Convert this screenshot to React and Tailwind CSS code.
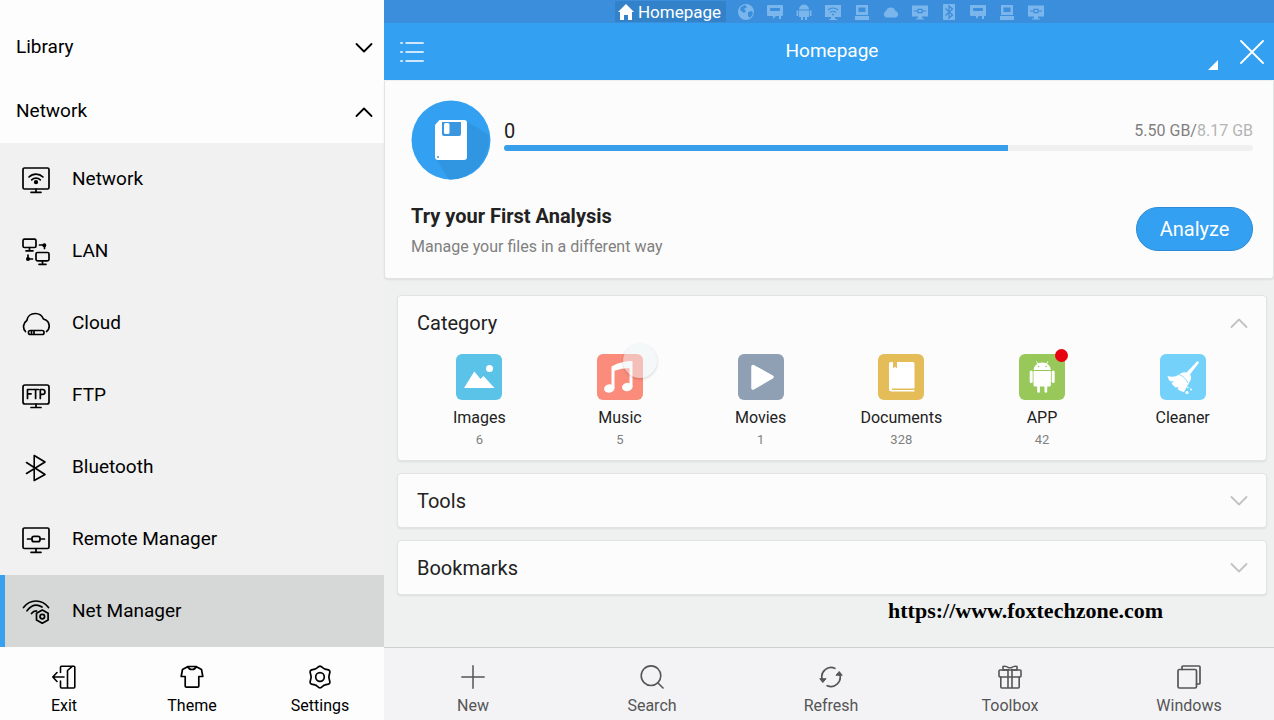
import React from "react";

function Svg({ size = "size-7", box = 28, width = 1.7, children, className = "" }) {
  return (
    <svg
      viewBox={`0 0 ${box} ${box}`}
      className={`${size} shrink-0 ${className}`}
      fill="none"
      stroke="currentColor"
      strokeWidth={width}
      strokeLinecap="round"
      strokeLinejoin="round"
      aria-hidden="true"
    >
      {children}
    </svg>
  );
}

/* Side menu icons */
const NetworkIcon = () => (
  <Svg>
    <rect x="1" y="2" width="26" height="21" rx="1.5" />
    <path d="M14 23v3M9 26.3h10M7 11a10 10 0 0 1 14 0M9.7 13.8a6.2 6.2 0 0 1 8.6 0" />
    <circle cx="14" cy="16.2" r="1.3" fill="currentColor" />
  </Svg>
);
const LanIcon = () => (
  <Svg>
    <rect x="1" y="1.2" width="13" height="8.3" rx="1.5" />
    <path d="M7.5 9.5v3M4 12.8h7" />
    <rect x="14" y="14.5" width="13" height="8.3" rx="1.5" />
    <path d="M20.500 22.800v3M17 26.300h7M17.500 7h5v3.500M10.500 21H6v-4" />
    <circle cx="22.300" cy="7.200" r="1.200" fill="currentColor" />
    <circle cx="6" cy="21" r="1.200" fill="currentColor" />
  </Svg>
);
const CloudIcon = () => (
  <Svg>
    <path d="M3.500 21.500A7.300 7.300 0 0 1 4.800 10.500C5.500 6.200 9 3.500 13.200 3.500c3.800 0 7 2.200 8.200 5.500C25 10 27.200 13 27.200 16.300c0 2-.8 3.900-2.600 5.200" />
    <rect x="6.500" y="20.500" width="15.500" height="4" rx="1.800" />
    <path d="M9.500 21v3M12 21v3" />
  </Svg>
);
const FtpIcon = () => (
  <Svg>
    <rect x="1" y="3" width="26" height="19" rx="2" />
    <path d="M14 22v3.500M9 25.500h10" />
    <path d="M5.500 16.500v-9h4.300M5.500 11.800h3.600M10.800 7.500h5.700M13.600 7.500v9M18.300 16.500v-9h2.200a2.300 2.300 0 0 1 0 4.900h-2.200" />
  </Svg>
);
const BluetoothIcon = () => (
  <Svg width={1.6}>
    <path d="M4.500 8.500l18.500 12-10.800 6V1.500L23 8 4.500 19.500" />
  </Svg>
);
const RemoteIcon = () => (
  <Svg>
    <rect x="1" y="2" width="26" height="20.500" rx="1.500" />
    <path d="M14 22.500V26M9 26.300h10M5.500 13h4.500M18 13h4.500" />
    <rect x="10" y="10.300" width="8" height="5.400" rx="2" />
  </Svg>
);
const NetManagerIcon = () => (
  <Svg>
    <path d="M1.500 9.500C8 .8 20 .8 26.500 9.500M5 12.800C9.500 7 15 6 20 9M9.500 15.500c1.200-1.700 3-2.600 5-2.600" />
    <path d="M20.300 12l5.800 3.300v6.600l-5.800 3.300-5.800-3.300v-6.600z" />
    <circle cx="20.300" cy="18.600" r="2.300" />
  </Svg>
);

/* Side footer icons */
const ExitIcon = () => (
  <Svg size="size-6" box={24} width={1.6}>
    <path d="M8.500 7.500V2.200Q8.500 1.200 9.500 1.200H21.800Q22.800 1.200 22.800 2.200V22Q22.800 23 21.800 23H9.500Q8.500 23 8.500 22V16M20.500 1.200L15.500 5.500V23M12 12H.8M5 7.500L.8 12 5 16.500" />
  </Svg>
);
const ThemeIcon = () => (
  <Svg size="size-6" box={24} width={1.7}>
    <path d="M8 1.500h8l5.500 3 1.300 7h-4V21q0 1.200-1.200 1.200H6.400Q5.200 22.200 5.200 21v-9.500h-4l1.300-7zM8 1.500c.8 4 7.200 4 8 0" />
  </Svg>
);
const SettingsIcon = () => (
  <Svg size="size-6" box={24} width={1.7}>
    <path d="M10.900 1.500q1.100-.7 2.200 0c1.600 1.200 2.400 2.300 4 2.600l3.300.8q1.500.5 1.500 1.900c-.2 2-1 3.400-1 5.200s.8 3.200 1 5.200q0 1.400-1.500 1.900l-3.300.8c-1.600.3-2.400 1.400-4 2.600q-1.100.7-2.200 0c-1.600-1.200-2.400-2.300-4-2.600l-3.300-.8q-1.500-.5-1.500-1.900c.2-2 1-3.400 1-5.200s-.8-3.200-1-5.200q0-1.400 1.500-1.900l3.300-.8c1.600-.3 2.400-1.400 4-2.600z" />
    <circle cx="12" cy="12" r="4.300" />
  </Svg>
);

/* Bottom toolbar icons */
const PlusIcon = () => (
  <Svg size="size-6" box={24} width={1.5}>
    <path d="M12 .8v22.400M.8 12h22.400" />
  </Svg>
);
const SearchIcon = () => (
  <Svg size="size-6" box={24} width={1.6}>
    <circle cx="11" cy="10.700" r="9.800" />
    <path d="M18 18l5 5" />
  </Svg>
);
const RefreshIcon = () => (
  <Svg size="size-6" box={24} width={1.7}>
    <path d="M15.800 3.300A9.300 9.300 0 0 0 3.200 14.500M8.200 20.700A9.300 9.300 0 0 0 20.800 9.500" />
    <path d="M1 14l2.800 3.500L6.800 14zM23 10l-2.800-3.500L17.200 10z" fill="currentColor" strokeWidth="1" />
  </Svg>
);
const ToolboxIcon = () => (
  <Svg size="size-6" box={24} width={1.6}>
    <rect x="1" y="5" width="22" height="7" rx="1" />
    <path d="M2.800 12v10q0 1 1 1h16.400q1 0 1-1V12M10 5v18M14 5v18M10.500 4.800L5 5V1.500q3-.8 5.500 1.200h3Q16 .7 19 1.500V5l-5.500-.2" />
  </Svg>
);
const WindowsIcon = () => (
  <Svg size="size-6" box={24} width={1.7}>
    <rect x="1" y="4.500" width="18.500" height="18.500" rx="1.500" />
    <path d="M5 4.500V2q0-1 1-1h16q1 0 1 1v16q0 1-1 1h-2.500" />
  </Svg>
);

const Chevron = ({ up, className }) => (
  <Svg size="size-[18px]" box={18} width={1.8} className={className}>
    <path d={up ? "M1.500 13L9 5.500l7.500 7.500" : "M1.500 5L9 12.500 16.500 5"} />
  </Svg>
);

/* Small solid glyphs of the window strip */
const dim = "#3a8edb";
const stripGlyphs = {
  web: (
    <>
      <circle cx="9" cy="9" r="8" />
      <path d="M4 4l4-2 2 2-3 2 2 2-2 2-4-3zM11 9l4-1 1 3-3 4-2-2z" fill={dim} />
    </>
  ),
  chat: (
    <>
      <path d="M2 2h14q1 0 1 1v9q0 1-1 1h-1v3h-2v-3h-3l-3 3v-3H2q-1 0-1-1V3q0-1 1-1z" />
      <rect x="4" y="5" width="10" height="3" rx="1" fill={dim} />
    </>
  ),
  android: (
    <path d="M4 6.500a5 5 0 0 1 10 0zM4 7.500h10V14H4zM1.500 7.500h1.800V13H1.500zM14.700 7.500h1.800V13h-1.800zM6 14h2v3H6zM10 14h2v3h-2zM5 1l2 2M13 1l-2 2" />
  ),
  wifi: (
    <>
      <path d="M1 2h16v12h-6v2h2v1H5v-1h2v-2H1z" />
      <path d="M4 7q5-4 10 0M6 9.500q3-2.500 6 0" fill="none" stroke={dim} strokeWidth="1.200" />
      <circle cx="9" cy="11.500" r="1" fill={dim} />
    </>
  ),
  pc: (
    <>
      <path d="M3 2h12v10H3zM2 13h14v4H2z" />
      <path d="M5.500 4.500h7V9h-7z" fill={dim} />
    </>
  ),
  cloud: <path d="M4 14.500a3.500 3.500 0 0 1 0-6.500 5 5 0 0 1 9.500 0A3.400 3.400 0 0 1 14 14.500z" />,
  remote: (
    <>
      <path d="M1 2.500h16v11h-6v2h2v1H5v-1h2v-2H1z" />
      <path d="M3 8h4M11 8h4M7 6.300h4v3.400H7z" fill="none" stroke={dim} strokeWidth="1.200" />
    </>
  ),
  bluetooth: (
    <>
      <rect x="3" y="1" width="12" height="16" rx="1" />
      <path d="M5.500 5.500l7 6.500L9 15V3l3.500 3-7 6.500" fill="none" stroke={dim} strokeWidth="1.300" />
    </>
  ),
};
const strip = [
  ["Web", "web"],
  ["Messages", "chat"],
  ["Apps", "android"],
  ["Wi-Fi", "wifi"],
  ["Computer", "pc"],
  ["Cloud", "cloud"],
  ["Remote", "remote"],
  ["Bluetooth", "bluetooth"],
  ["Messages 2", "chat"],
  ["Computer 2", "pc"],
  ["Remote 2", "remote"],
];

const menu = [
  ["Network", NetworkIcon],
  ["LAN", LanIcon],
  ["Cloud", CloudIcon],
  ["FTP", FtpIcon],
  ["Bluetooth", BluetoothIcon],
  ["Remote Manager", RemoteIcon],
  ["Net Manager", NetManagerIcon],
];

/* Category tiles, drawn on a 46-unit square */
const categories = [
  {
    name: "Images",
    count: "6",
    color: "bg-[#5bc3e8]",
    art: (
      <>
        <path d="M8 34L18.300 17.500l6.200 7.500 3-3L38.500 34z" />
        <circle cx="33.500" cy="14.500" r="3.500" />
      </>
    ),
  },
  {
    name: "Music",
    count: "5",
    color: "bg-[#fb8b7a]",
    touch: true,
    art: (
      <>
        <path d="M14.500 12.500Q24 7 35.500 7v26h-3V14q-8 .2-15 2.800V34h-3z" />
        <ellipse cx="12.300" cy="34.500" rx="5.300" ry="4.200" transform="rotate(-15 12.300 34.500)" />
        <ellipse cx="30.300" cy="33" rx="5.300" ry="4.200" transform="rotate(-15 30.300 33)" />
      </>
    ),
  },
  {
    name: "Movies",
    count: "1",
    color: "bg-[#8fa0b4]",
    art: <path d="M15 12.500L34 23 15 34z" stroke="white" strokeWidth="3.500" strokeLinejoin="round" />,
  },
  {
    name: "Documents",
    count: "328",
    color: "bg-[#e4bd59]",
    art: (
      <path d="M12.500 8H15v6.500l2-1.800 2 1.800V8h16q1.500 0 1.500 1.500v25H14v1.500h22.500v1.500h-23q-2.500 0-2.500-2.500V9.500Q11 8 12.500 8z" />
    ),
  },
  {
    name: "APP",
    count: "42",
    color: "bg-[#98c85a]",
    badge: true,
    art: (
      <>
        <path d="M14.500 16a8.700 7.500 0 0 1 17.400 0z" />
        <path d="M17.500 7.500l2 3.500M28.900 7.500l-2 3.500" stroke="white" strokeWidth="1" />
        <path d="M14.500 17h17.400v14q0 1.500-1.500 1.500h-2.200v5.200q0 1-1.300 1t-1.400-1v-5.200h-4.600v5.200q0 1-1.300 1t-1.400-1v-5.200H16q-1.500 0-1.500-1.500z" />
        <rect x="10.700" y="16.500" width="3" height="12.500" rx="1.500" />
        <rect x="32.700" y="16.500" width="3" height="12.500" rx="1.500" />
        <circle cx="19.500" cy="12.500" r=".8" fill="#98c85a" />
        <circle cx="27" cy="12.500" r=".8" fill="#98c85a" />
      </>
    ),
  },
  {
    name: "Cleaner",
    count: "",
    color: "bg-[#74d2fa]",
    art: (
      <>
        <path d="M37.500 7l1.600 1.500L30 20.500q2.500 3.500-.5 7.500L24 38q-4-.5-6.500-3l1-2-3 .500q-3-2-4-4.500l3-1.500-4.500-.2Q8 25 7.500 22q7 2 11.500-1.500 3.500-3 7.500-2z" />
        <path d="M19 20.500q6 2 9 8.500" stroke="#74d2fa" strokeWidth=".8" fill="none" />
        <circle cx="27" cy="38.500" r="1.600" />
        <circle cx="31" cy="35.500" r="1" />
        <circle cx="28" cy="33.500" r=".8" />
      </>
    ),
  },
];

const tools = [
  ["New", PlusIcon],
  ["Search", SearchIcon],
  ["Refresh", RefreshIcon],
  ["Toolbox", ToolboxIcon],
  ["Windows", WindowsIcon],
];

const card = "rounded-sm border border-[#e2e4e4] bg-[#fcfcfc] shadow-[0_1px_2px_rgba(0,0,0,0.08)]";

function Sidebar() {
  return (
    <aside className="flex w-96 shrink-0 flex-col bg-[#fdfdfd] text-black">
      <div className="pt-[15px]">
        {["Library", "Network"].map((name) => (
          <button key={name} className="flex h-16 w-full items-center justify-between pt-px pr-[11px] pl-4 text-[19px]">
            {name}
            <Chevron up={name === "Network"} />
          </button>
        ))}
      </div>
      <nav className="flex-1 bg-[#f1f1f1]">
        {menu.map(([name, Icon]) => (
          <a
            key={name}
            href="#"
            className={`flex h-[72px] items-center gap-[22px] border-l-[5px] pt-px pl-[17px] text-[19px] ${
              name === "Net Manager" ? "border-[#3aa0ee] bg-[#d6d7d7]" : "border-transparent"
            }`}
          >
            <Icon />
            {name}
          </a>
        ))}
      </nav>
      <div className="grid h-[73px] grid-cols-3 pt-[18px]">
        {[
          ["Exit", ExitIcon],
          ["Theme", ThemeIcon],
          ["Settings", SettingsIcon],
        ].map(([name, Icon]) => (
          <button key={name} className="flex flex-col items-center gap-[5px] text-base leading-6">
            <Icon />
            {name}
          </button>
        ))}
      </div>
    </aside>
  );
}

function Storage() {
  return (
    <section className="mt-px rounded-b-sm border-x border-b border-[#e2e4e4] bg-[#fcfcfc] pt-[19px] pr-5 pb-4 pl-[26px] shadow-[0_1px_2px_rgba(0,0,0,0.08)]">
      <div className="flex items-center gap-[13px]">
        <svg viewBox="0 0 80 80" className="size-20 shrink-0" aria-hidden="true">
          <circle cx="40" cy="40" r="39.500" fill="#34a0f2" />
          <path d="M55 21L77.500 34.500A39.500 39.500 0 0 1 38 79.400L25 59z" fill="#3096e1" />
          <path d="M28.500 20H53q3 0 3 3v34q0 3-3 3H27q-3 0-3-3V25z" fill="white" />
          <path d="M31 22h19v12q0 2-2 2H33q-2 0-2-2z" fill="#3a97df" />
          <rect x="33" y="23" width="5.500" height="11" rx="1.500" fill="white" />
          <circle cx="27" cy="57" r="1" fill="#3a97df" />
        </svg>
        <div className="flex-1 pb-2.5">
          <div className="flex items-center justify-between leading-6">
            <span className="text-xl leading-6 text-[#222]">0</span>
            <span className="text-base leading-6 text-[#808080]">
              5.50 GB/<span className="text-[#b4b4b4]">8.17 GB</span>
            </span>
          </div>
          <div className="mt-0.5 h-1.5 overflow-hidden rounded-full bg-[#f0f0f0]" role="progressbar" aria-label="Storage used" aria-valuenow={67}>
            <div className="h-full bg-[#3a9fea]" style={{ width: `${(5.5 / 8.17) * 100}%` }} />
          </div>
        </div>
      </div>
      <div className="mt-5 flex items-start justify-between">
        <div>
          <h2 className="text-xl leading-8 font-bold text-[#222]">Try your First Analysis</h2>
          <p className="text-base leading-[30px] text-[#808080]">Manage your files in a different way</p>
        </div>
        <button className="mt-[7px] h-11 w-[117px] rounded-full border border-[#2c8bd6] bg-[#34a0f2] text-xl text-white">
          Analyze
        </button>
      </div>
    </section>
  );
}

function Category() {
  return (
    <section className={card}>
      <button className="flex h-[53px] w-full items-center justify-between pr-[18px] pl-[19px] text-xl text-[#222]">
        Category
        <Chevron up className="text-[#c2c2c2]" />
      </button>
      <div className="grid grid-cols-6 pt-[5px] pr-[13px] pb-2 pl-[11px]">
        {categories.map((c) => (
          <button key={c.name} className="flex flex-col items-center">
            <span className={`relative size-[46px] rounded-md ${c.color}`}>
              <svg viewBox="0 0 46 46" className="size-full" fill="white" aria-hidden="true">
                {c.art}
              </svg>
              {c.badge && <span className="absolute -top-[5px] -right-[3px] size-[13px] rounded-full bg-[#e60012]" />}
              {c.touch && (
                <span className="absolute -top-2.5 left-[26px] size-[34px] rounded-full bg-[#eef3f6]/50 shadow-[0_1px_3px_rgba(0,0,0,0.18)]" />
              )}
            </span>
            <span className="mt-2 text-base leading-5 text-[#222]">{c.name}</span>
            <span className="h-6 text-[13px] leading-6 text-[#808080]">{c.count}</span>
          </button>
        ))}
      </div>
    </section>
  );
}

export default function App() {
  return (
    <div className="flex min-h-screen font-[Roboto,sans-serif]">
      <Sidebar />
      <main className="flex min-w-0 flex-1 flex-col bg-[#eff0f0]">
        <div className="flex h-[23px] items-center justify-center gap-[11px] bg-[#3a8edb] pl-0.5">
          <button className="flex h-[21px] items-center gap-1 bg-[#3382c9] pr-[5px] pl-[3px] text-[17px] leading-5 text-white">
            <svg viewBox="0 0 16 16" className="size-4" fill="currentColor" aria-hidden="true">
              <path d="M8 0l8 8h-2v8h-4v-5H6v5H2V8H0z" />
            </svg>
            Homepage
          </button>
          {strip.map(([label, glyph]) => (
            <button key={label} aria-label={label} className="text-[#7ab5ec]">
              <svg viewBox="0 0 18 18" className="block size-[18px]" fill="currentColor" aria-hidden="true">
                {stripGlyphs[glyph]}
              </svg>
            </button>
          ))}
        </div>

        <header className="grid h-[57px] grid-cols-[1fr_auto_1fr] items-center bg-[#34a0f2] pr-2.5 pl-4 text-white">
          <button aria-label="Menu" className="justify-self-start">
            <svg viewBox="0 0 24 24" className="block size-6" stroke="currentColor" strokeWidth="1.500" strokeLinecap="round" aria-hidden="true">
              <path d="M.8 3h1.500M6 3h17.200M.8 12h1.500M6 12h17.200M.8 21h1.500M6 21h17.200" />
            </svg>
          </button>
          <h1 className="text-[19px]">Homepage</h1>
          <div className="flex items-end gap-[22px] justify-self-end">
            <svg viewBox="0 0 10 10" className="-mb-1.5 size-2.5" fill="currentColor" aria-hidden="true">
              <path d="M10 0v10H0z" />
            </svg>
            <button aria-label="Close">
              <Svg size="size-6" box={24} width={1.8} className="block">
                <path d="M1 1l22 22M23 1L1 23" />
              </Svg>
            </button>
          </div>
        </header>

        <Storage />

        <div className="flex flex-1 flex-col gap-3 pt-4 pr-[7px] pl-[13px]">
          <Category />
          {["Tools", "Bookmarks"].map((name) => (
            <section key={name} className={card}>
              <button className="flex h-[53px] w-full items-center justify-between pr-[18px] pl-[19px] text-xl text-[#222]">
                {name}
                <Chevron className="text-[#c2c2c2]" />
              </button>
            </section>
          ))}
          <a
            href="https://www.foxtechzone.com"
            className="-mt-2 mr-26 self-end font-['Liberation_Serif',serif] text-[22px] leading-6 font-bold text-black"
          >
            https://www.foxtechzone.com
          </a>
        </div>

        <footer className="flex h-[73px] justify-between border-t border-[#cfcfd1] bg-[#f3f3f5] pt-[17px] pr-[45px] pl-[49px] text-[#555]">
          {tools.map(([name, Icon]) => (
            <button key={name} className="flex w-20 flex-col items-center gap-[5px] text-base leading-6">
              <Icon />
              {name}
            </button>
          ))}
        </footer>
      </main>
    </div>
  );
}
